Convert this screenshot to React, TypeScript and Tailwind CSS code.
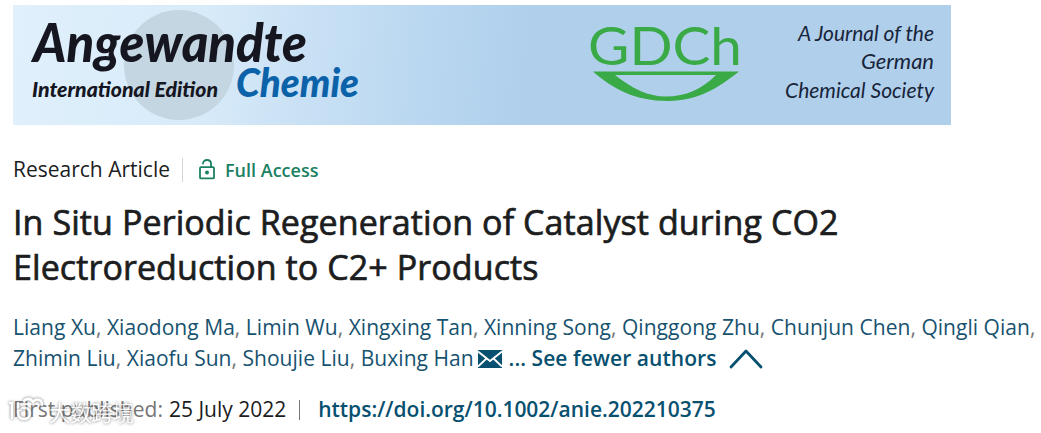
import React from 'react';

const AUTHORS = [
  ['Liang Xu', 'Xiaodong Ma', 'Limin Wu', 'Xingxing Tan', 'Xinning Song', 'Qinggong Zhu', 'Chunjun Chen', 'Qingli Qian'],
  ['Zhimin Liu', 'Xiaofu Sun', 'Shoujie Liu', 'Buxing Han'],
];

const JournalBanner: React.FC = () => (
  <header className="h-[120px] w-[938px] bg-[linear-gradient(95deg,#e0f0fc_0%,#d8ebf9_20%,#cbe2f5_30%,#b9d7f0_44%,#b0cfeb_55%)]">
    <svg width="938" height="120" viewBox="0 0 938 120" className="block">
      <circle cx="166" cy="60" r="55" fill="#c3d6e2" />
      <g fontFamily="Lato, sans-serif" fontStyle="italic" fontWeight="900">
        <text x="20" y="57" fontSize="53" fill="#15161f" textLength="274" lengthAdjust="spacingAndGlyphs">Angewandte</text>
        <text x="19" y="92" fontSize="20.5" fill="#15161f" textLength="186" lengthAdjust="spacingAndGlyphs">International Edition</text>
        <text x="223" y="92" fontSize="39" fill="#0c62a9" textLength="123" lengthAdjust="spacingAndGlyphs">Chemie</text>
      </g>
      <g fontFamily="Lato, sans-serif" fontStyle="italic" fontSize="21.5" fill="#17243a">
        <text x="785" y="36" textLength="136" lengthAdjust="spacingAndGlyphs">A Journal of the</text>
        <text x="848" y="64" textLength="73" lengthAdjust="spacingAndGlyphs">German</text>
        <text x="772" y="93" textLength="149" lengthAdjust="spacingAndGlyphs">Chemical Society</text>
      </g>
      <text x="575" y="60" fontFamily="Lato, sans-serif" fontSize="53" fill="#3aaa47" textLength="154" lengthAdjust="spacingAndGlyphs">GDCh</text>
      <path d="M580 66.5H726C706 82 686 96 655 96C622 96 600 84 580 66.5ZM602 70C620 84 635 91.5 653 91.5C673 91.5 689 84 703 70Z" fill="#3aaa47" fillRule="evenodd" />
    </svg>
  </header>
);

const LockIcon: React.FC = () => (
  <svg width="18" height="22" viewBox="0 0 18 22" fill="none" stroke="#1b8163" strokeWidth="1.8" strokeLinejoin="round">
    <rect x="2" y="8.2" width="14" height="11.2" rx="1" />
    <path d="M5 4.6C5 2.6 6.5 1 9 1C11.5 1 13 2.6 13 4.6V8.2" strokeLinecap="round" />
    <circle cx="9" cy="13.6" r="2" fill="#1b8163" stroke="none" />
  </svg>
);

const MailIcon: React.FC = () => (
  <svg width="24" height="18" viewBox="0 0 24 18">
    <rect width="24" height="18" fill="#07506f" />
    <path d="M0 1.5L12 11L24 1.5M0 16.5L8.5 8.5M24 16.5L15.5 8.5" fill="none" stroke="#fff" strokeWidth="1.8" />
  </svg>
);

const Watermark: React.FC = () => (
  <svg width="140" height="34" viewBox="0 0 140 34" className="absolute -left-[7px] -top-[1px] opacity-75 drop-shadow-[0_0_1.5px_#444]">
    <g fill="none" stroke="#fff" strokeWidth="2.6" strokeLinecap="round">
      <path d="M4 10H6V25" />
      <path d="M12 10V20C12 28 24 28 24 20.5C24 15 18 13 14 17" />
      <path d="M18 8C20 5 25 5 27 9C30 5 36 6 36 12" />
    </g>
    <text x="43" y="28" fontFamily="'Noto Sans CJK SC', sans-serif" fontSize="21.5" fill="#fff" textLength="85">大数跨境</text>
  </svg>
);

const App: React.FC = () => (
  <main className="h-[433px] w-[1041px] overflow-hidden bg-white pl-[13px] pt-[5px] font-['Open_Sans',sans-serif] text-[#1c1d1e]">
    <JournalBanner />

    <div className="mt-[33px] flex h-6 items-center whitespace-nowrap">
      <span className="w-[157px] text-[21px]">Research Article</span>
      <span className="ml-3 h-6 w-px bg-[#d5d5d5]" />
      <span className="ml-[15px]"><LockIcon /></span>
      <span className="ml-[9px] text-[18px] font-semibold text-[#1b8163]">Full Access</span>
    </div>

    {/* stroke stands in for the medium weight */}
    <h1 className="mt-[18px] whitespace-nowrap text-[34px] leading-[45px] tracking-[0.09px] [-webkit-text-stroke:0.7px_#1c1d1e]">
      In Situ Periodic Regeneration of Catalyst during CO2<br />
      Electroreduction to C2+ Products
    </h1>

    <div className="mt-[22px] whitespace-nowrap text-[21px] leading-[31px] tracking-[0.035px] text-[#17526f]">
      {AUTHORS.map((line, row) => (
        <div key={line[0]} className="flex h-[31px] items-center">
          <span>
            {line.map((name, i) => (
              <React.Fragment key={name}>
                {name}
                {(row === 0 || i < line.length - 1) && <span className="text-[#767676]">, </span>}
              </React.Fragment>
            ))}
          </span>
          {row === 1 && (
            <>
              <span className="ml-1"><MailIcon /></span>
              <span className="ml-[7px] font-semibold tracking-[0.06px] text-[#07506f]">... See fewer authors</span>
              <svg className="ml-3" width="34" height="20" viewBox="0 0 34 20" fill="none" stroke="#07506f" strokeWidth="2.8" strokeLinecap="round" strokeLinejoin="round">
                <path d="M2 18L17 2L32 18" />
              </svg>
            </>
          )}
        </div>
      ))}
    </div>

    <div className="relative mt-5 flex h-[31px] items-center whitespace-nowrap text-[21px]">
      <span className="text-[#767676]">First published:</span>
      <span className="ml-[6px]">25 July 2022</span>
      <span className="ml-[13px] h-5 w-px bg-[#767676]" />
      <span className="ml-[18px] font-semibold tracking-[-0.01px] text-[#07506f]">https://doi.org/10.1002/anie.202210375</span>
      <Watermark />
    </div>
  </main>
);

export default App;
